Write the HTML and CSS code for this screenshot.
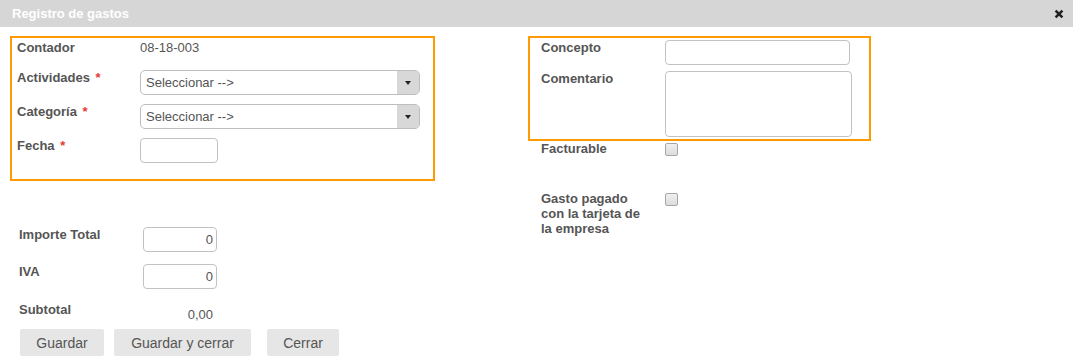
FILE: index.html
```html
<!DOCTYPE html>
<html lang="es">
  <head>
    <meta charset="UTF-8" />
    <title>Registro de gastos</title>
    <link rel="stylesheet" href="styles.css">
  </head>
  <body>
    <div class="dialog">
      <div class="dialog-header">
        <span class="dialog-title">Registro de gastos</span>
        <span class="close-btn">
          <svg width="10" height="10" viewBox="0 0 10 10">
            <path d="M1.6 1.6 L8.4 8.4 M8.4 1.6 L1.6 8.4" stroke="#222" stroke-width="2.6" fill="none" />
          </svg>
        </span>
      </div>

      <div class="dialog-body">
        <div class="col-left">
          <div class="highlight-box box-left">
            <div class="form-row row-contador">
              <label>Contador</label>
              <span class="value">08-18-003</span>
            </div>
            <div class="form-row">
              <label>Actividades <span class="required">*</span></label>
              <div class="select">
                <span class="select-text">Seleccionar --&gt;</span>
                <span class="select-arrow"></span>
              </div>
            </div>
            <div class="form-row">
              <label>Categoría <span class="required">*</span></label>
              <div class="select">
                <span class="select-text">Seleccionar --&gt;</span>
                <span class="select-arrow"></span>
              </div>
            </div>
            <div class="form-row">
              <label>Fecha <span class="required">*</span></label>
              <input type="text" class="text-input date-input" />
            </div>
          </div>

          <div class="totals">
            <div class="total-row">
              <label>Importe Total</label>
              <input type="text" class="text-input amount-input" value="0" />
            </div>
            <div class="total-row">
              <label>IVA</label>
              <input type="text" class="text-input amount-input" value="0" />
            </div>
            <div class="total-row subtotal-row">
              <label>Subtotal</label>
              <span class="subtotal-value">0,00</span>
            </div>
          </div>

          <div class="actions">
            <button class="btn btn-save">Guardar</button>
            <button class="btn btn-wide">Guardar y cerrar</button>
            <button class="btn btn-close">Cerrar</button>
          </div>
        </div>

        <div class="col-right">
          <div class="highlight-box box-right">
            <div class="form-row concept-row">
              <label>Concepto</label>
              <input type="text" class="text-input concept-input" />
            </div>
            <div class="form-row comment-row">
              <label>Comentario</label>
              <textarea class="comment-input"></textarea>
            </div>
          </div>

          <div class="check-rows">
            <div class="check-row">
              <label>Facturable</label>
              <input type="checkbox" class="checkbox" />
            </div>
            <div class="check-row">
              <label>Gasto pagado con la tarjeta de la empresa</label>
              <input type="checkbox" class="checkbox" />
            </div>
          </div>
        </div>
      </div>
    </div>
  </body>
</html>
```

FILE: styles.css
```css
body {
  margin: 0;
  font-family: "Liberation Sans", Arial, sans-serif;
  font-size: 13px;
  line-height: 15px;
  color: #555555;
  background-color: #ffffff;
}
.dialog-header {
  height: 27px;
  background-color: #d6d6d6;
  display: flex;
  align-items: center;
  justify-content: space-between;
  padding: 0 9px 0 12px;
}
.dialog-title {
  color: #ffffff;
  font-weight: bold;
}
.close-btn {
  display: flex;
  cursor: pointer;
}
.dialog-body {
  display: flex;
}
.col-left {
  width: 425px;
  margin-left: 10px;
}
.col-right {
  width: 343px;
  margin-left: 93px;
}
.highlight-box {
  border: 2px solid #ff9a00;
  margin-top: 9px;
}
.box-left {
  padding: 2px 0 7px 5px;
}
.box-right {
  padding: 2px 0 2px 11px;
}
.form-row {
  display: flex;
  align-items: flex-start;
  margin-bottom: 9px;
}
.form-row label {
  width: 123px;
  flex-shrink: 0;
  font-weight: bold;
}
.box-right .form-row label {
  width: 124px;
}
.row-contador {
  height: 21px;
}
.required {
  color: #e53935;
  margin-left: 2px;
}
.select {
  width: 280px;
  height: 25px;
  box-sizing: border-box;
  border: 1px solid #bdbdbd;
  border-radius: 5px;
  display: flex;
  align-items: center;
  overflow: hidden;
}
.select-text {
  flex: 1;
  padding-left: 5px;
}
.select-arrow {
  width: 22px;
  align-self: stretch;
  background-color: #d8d8d8;
  display: flex;
  align-items: center;
  justify-content: center;
}
.select-arrow::after {
  content: "";
  border-left: 3.5px solid transparent;
  border-right: 3.5px solid transparent;
  border-top: 4px solid #222222;
  margin-right: 1px;
}
.text-input {
  height: 25px;
  box-sizing: border-box;
  border: 1px solid #c2c2c2;
  border-radius: 4px;
  font: inherit;
  color: #555555;
  margin: 0;
  padding: 0 3px;
  outline: none;
}
.date-input {
  width: 78px;
}
.concept-row {
  margin-bottom: 6px;
}
.concept-input {
  width: 185px;
}
.comment-row {
  margin-bottom: 0;
}
.comment-input {
  width: 187px;
  height: 66px;
  box-sizing: border-box;
  border: 1px solid #c2c2c2;
  border-radius: 4px;
  margin: 0;
  resize: none;
  font: inherit;
}
.check-rows {
  padding-left: 13px;
}
.check-row {
  display: flex;
  align-items: flex-start;
  height: 50px;
}
.check-row label {
  width: 124px;
  padding-right: 14px;
  box-sizing: border-box;
  font-weight: bold;
}
.checkbox {
  appearance: none;
  width: 13px;
  height: 13px;
  margin: 2px 0 0;
  border: 1px solid #a6a6a6;
  border-radius: 2px;
  background: linear-gradient(#f0f0f0, #dcdcdc);
}
.totals {
  margin-top: 46px;
  padding-left: 9px;
}
.total-row {
  display: flex;
  align-items: flex-start;
  margin-bottom: 12px;
}
.total-row label {
  width: 124px;
  font-weight: bold;
}
.amount-input {
  width: 74px;
  text-align: right;
}
.total-row + .total-row {
  margin-bottom: 13px;
}
.subtotal-row {
  height: 20px;
  margin-bottom: 0 !important;
}
.subtotal-value {
  width: 74px;
  box-sizing: border-box;
  padding: 5px 4px 0 0;
  text-align: right;
}
.actions {
  display: flex;
  gap: 10px;
  margin: 7px 0 0 10px;
}
.btn {
  height: 27px;
  padding: 0;
  border: none;
  border-radius: 2px;
  background-color: #e6e6e6;
  color: #555555;
  font-family: inherit;
  font-size: 14px;
  cursor: pointer;
}
.btn-save {
  width: 84px;
}
.btn-wide {
  width: 137px;
}
.btn-close {
  width: 72px;
  margin-left: 6px;
}
```
